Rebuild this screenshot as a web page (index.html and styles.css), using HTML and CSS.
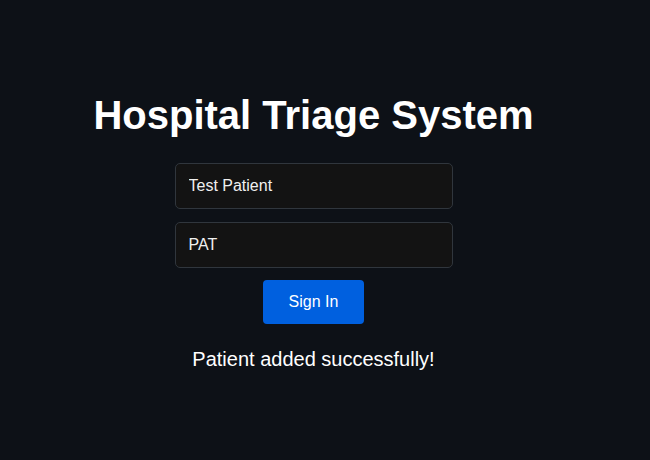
FILE: index.html
```html
<!DOCTYPE html>
<html lang="en">
<head>
<meta charset="utf-8">
<title>Hospital Triage System</title>
<link rel="stylesheet" href="styles.css">
</head>
<body>
<main class="app">
  <h1 class="title">Hospital Triage System</h1>
  <form class="login">
    <input class="field" type="text" value="Test Patient">
    <input class="field" type="text" value="PAT">
    <button class="btn" type="button">Sign In</button>
  </form>
  <p class="message">Patient added successfully!</p>
</main>
</body>
</html>
```

FILE: styles.css
```css
html, body {
  margin: 0;
  height: 100%;
  background: #0d1117;
}
body {
  font-family: "Liberation Sans", Arial, sans-serif;
  color: #ffffff;
}
.app {
  width: 627px;
  padding-top: 92px;
  display: flex;
  flex-direction: column;
  align-items: center;
}
.title {
  margin: 0;
  font-size: 40px;
  line-height: 46px;
  font-weight: bold;
  color: #ffffff;
}
.login {
  margin-top: 25px;
  display: flex;
  flex-direction: column;
  align-items: center;
  gap: 13px;
}
.field {
  box-sizing: border-box;
  width: 278px;
  height: 46px;
  padding: 0 13px;
  background: #131313;
  border: 1px solid #30363d;
  border-radius: 5px;
  color: #f0f0f0;
  font-family: "Liberation Sans", Arial, sans-serif;
  font-size: 16px;
  outline: none;
}
.btn {
  margin-top: -1px;
  box-sizing: border-box;
  width: 101px;
  height: 44px;
  border: none;
  border-radius: 4px;
  background: #0060df;
  color: #ffffff;
  font-family: "Liberation Sans", Arial, sans-serif;
  font-size: 16px;
  cursor: pointer;
}
.message {
  margin: 24px 0 0;
  font-size: 20px;
  line-height: 23px;
  color: #ffffff;
}
```
